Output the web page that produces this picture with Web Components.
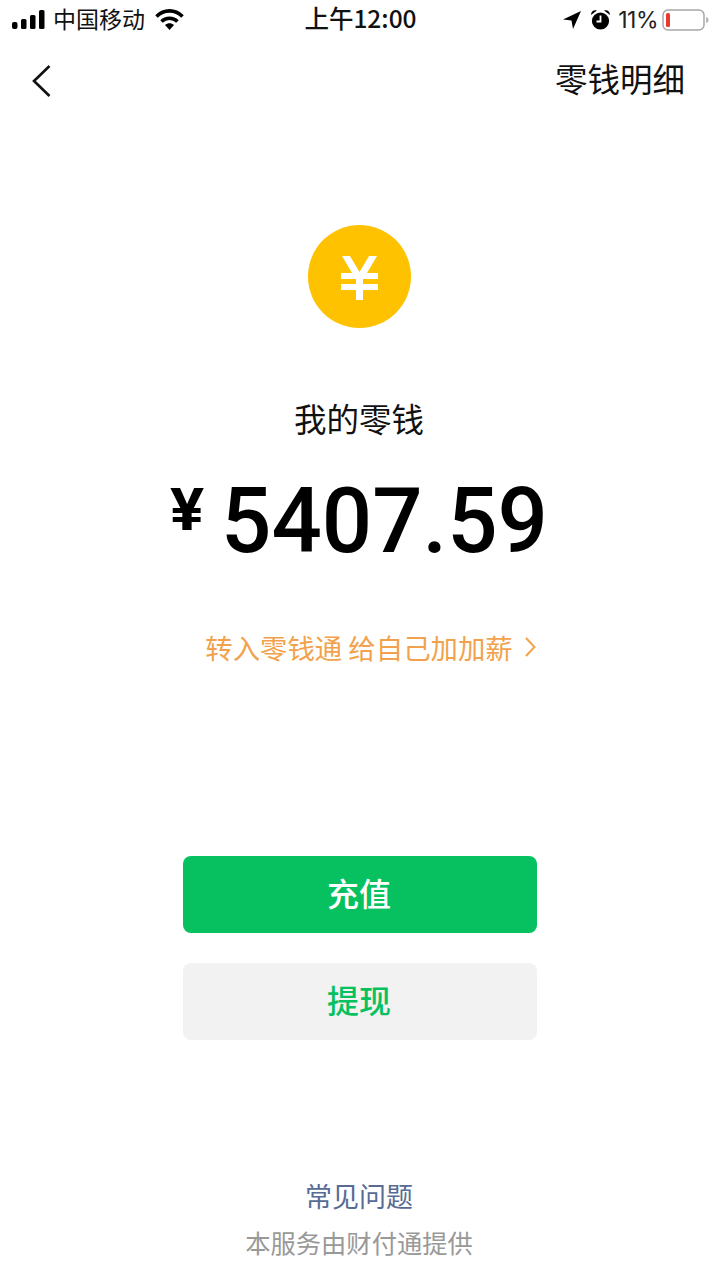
<!DOCTYPE html>
<html lang="zh">
<head>
<meta charset="utf-8">
<title>零钱</title>
<style>
  html, body { margin: 0; background: #fff; }
  body { font-family: "Noto Sans CJK SC", "Noto Sans", sans-serif; color: #000; }
</style>
</head>
<body>
<wallet-page></wallet-page>

<script>
const FONT = `"Noto Sans CJK SC", "Noto Sans", sans-serif`;

class StatusBar extends HTMLElement {
  constructor() {
    super();
    this.attachShadow({ mode: 'open' });
    this.shadowRoot.innerHTML = `
      <style>
        :host { display: grid; grid-template-columns: 1fr auto 1fr; align-items: center; height: 40px; padding: 0 11px 0 12px; font: 400 23px/36px ${FONT}; color: #111; }
        .left, .right { display: flex; align-items: center; }
        .right { justify-content: flex-end; }
        .carrier { margin-left: 8px; padding-bottom: 4px; }
        .wifi { margin-left: 10px; }
        .time { font-size: 24.500px; font-weight: 500; padding-bottom: 4px; }
        .pct { margin-left: 7px; padding-bottom: 1px; font-family: "Inter", "Liberation Sans", sans-serif; font-size: 23px; letter-spacing: -.5px; color: #222; }
        .alarm { margin-left: 8px; }
        .batt { margin-left: 4px; }
        svg { display: block; }
      </style>
      <div class="left">
        <svg width="33" height="20" viewBox="0 0 33 20">
          <rect x="0" y="12" width="5.500" height="7" rx="2"/>
          <rect x="9" y="9" width="5.500" height="10" rx="1.5"/>
          <rect x="18" y="5" width="5.500" height="14" rx="1.5"/>
          <rect x="27" y="0" width="5.500" height="19" rx="1.5"/>
        </svg>
        <span class="carrier">中国移动</span>
        <svg class="wifi" width="29" height="22" viewBox="0 0 29 22">
          <path d="M1.5 7.5C9-0 20-0 27.5 7.500" fill="none" stroke="#000" stroke-width="3.600"/>
          <path d="M6.500 12.500C11 8.200 18 8.200 22.500 12.500" fill="none" stroke="#000" stroke-width="3.600"/>
          <path d="M10 16 C12.800 13.500 16.200 13.500 19 16 L14.500 21Z"/>
        </svg>
      </div>
      <div class="time">上午12:00</div>
      <div class="right">
        <svg width="20" height="20" viewBox="0 0 20 20"><path d="M19 1 L1 9.500 L9.500 10.500 L11 19Z"/></svg>
        <svg class="alarm" width="21" height="22" viewBox="0 0 21 22">
          <circle cx="10.500" cy="12" r="8.600"/>
          <path d="M1 6 C1 2 4 0.500 7 1.500Z M20 6 C20 2 17 0.500 14 1.500Z"/>
          <path d="M10.500 6.500 V12.500 H6.500" fill="none" stroke="#fff" stroke-width="1.800"/>
        </svg>
        <span class="pct">11%</span>
        <svg class="batt" width="47" height="24" viewBox="0 0 47 24">
          <rect x="1" y="2" width="41" height="20" rx="5" fill="none" stroke="#a8a8a8" stroke-width="1.500"/>
          <rect x="4" y="5" width="4" height="14" rx="1.500" fill="#e8392f"/>
          <path d="M44 9 C46 9.500 46.500 10.500 46.500 12 C46.500 13.500 46 14.500 44 15Z" fill="#b5b5b5"/>
        </svg>
      </div>
    `;
  }
}

class NavBar extends HTMLElement {
  constructor() {
    super();
    this.attachShadow({ mode: 'open' });
    this.shadowRoot.innerHTML = `
      <style>
        :host { display: flex; align-items: center; justify-content: space-between; height: 82px; padding: 0 35px 0 32px; box-sizing: border-box; }
        span { font: 400 32.500px/1 ${FONT}; color: #111; padding-bottom: 6px; }
        svg { display: block; }
      </style>
      <svg width="20" height="34" viewBox="0 0 20 34"><path d="M17.500 2 L2 17 L17.500 32" fill="none" stroke="#111" stroke-width="2.600"/></svg>
      <span><slot></slot></span>
    `;
  }
}

class CoinIcon extends HTMLElement {
  constructor() {
    super();
    this.attachShadow({ mode: 'open' });
    this.shadowRoot.innerHTML = `
      <style>
        :host { display: block; width: 103px; height: 103px; }
        svg { display: block; }
      </style>
      <svg width="103" height="103" viewBox="0 0 103 103">
        <circle cx="51.500" cy="51.500" r="51.500" fill="#fec200"/>
        <path d="M34 31 H42 L51.500 47 L61 31 H69 L59 48 H70 V54 H55 V59 H70 V65 H55 V75 H48 V65 H33 V59 H48 V54 H33 V48 H44Z" fill="#fff"/>
      </svg>
    `;
  }
}

class BalanceAmount extends HTMLElement {
  constructor() {
    super();
    this.attachShadow({ mode: 'open' });
    this.shadowRoot.innerHTML = `
      <style>
        :host { display: flex; justify-content: center; align-items: flex-start; height: 100px; color: #000; }
        .yen { font: 700 59px/1 "Roboto", "Liberation Sans", sans-serif; width: 32px; margin-top: -7px; margin-right: 20px; text-align: center; transform: translateX(2px) scaleX(1.080); }
        .num { font: 500 90px/100px "Roboto", "Liberation Sans", sans-serif; display: inline-block; width: 322px; white-space: nowrap; transform: scaleX(.985); transform-origin: left top; margin-top: -15px; }
      </style>
      <span class="yen">¥</span><span class="num"></span>
    `;
  }
  connectedCallback() {
    this.shadowRoot.querySelector('.num').textContent = this.getAttribute('value');
  }
}

class WalletButton extends HTMLElement {
  constructor() {
    super();
    this.attachShadow({ mode: 'open' });
    this.shadowRoot.innerHTML = `
      <style>
        :host { display: flex; align-items: center; justify-content: center; width: 354px; height: 77px; box-sizing: border-box; padding: 0 2px 5px 0; border-radius: 8px; font: 500 32px/1 ${FONT}; background: #f2f2f2; color: #07c160; }
        :host([primary]) { background: #07c160; color: #fff; }
      </style>
      <slot></slot>
    `;
  }
}

class WalletPage extends HTMLElement {
  constructor() {
    super();
    this.attachShadow({ mode: 'open' });
    this.shadowRoot.innerHTML = `
      <style>
        :host { display: flex; flex-direction: column; align-items: stretch; width: 720px; height: 1280px; overflow: hidden; background: #fff; font-family: ${FONT}; }
        .main { display: flex; flex-direction: column; align-items: center; }
        coin-icon { margin-top: 103px; margin-left: -1px; }
        .title { margin-top: 68px; margin-left: -2px; font-size: 32.500px; line-height: 44px; color: #111; }
        balance-amount { margin-top: 47px; margin-left: -8px; }
        .promo { display: flex; align-items: center; margin-top: 42px; margin-left: 21px; font-size: 27.400px; line-height: 36px; color: #f2a24c; white-space: pre; }
        .promo svg { display: block; margin-left: 12px; }
        .actions { display: flex; flex-direction: column; align-items: center; gap: 30px; margin-top: 191px; }
        .foot { display: flex; flex-direction: column; align-items: center; margin-top: 138px; }
        .faq { margin-left: -2px; font-size: 27px; line-height: 36px; color: #576b95; }
        .by { margin-top: 10px; margin-left: -2px; font-size: 25.300px; line-height: 36px; color: #999; }
      </style>
      <status-bar></status-bar>
      <nav-bar>零钱明细</nav-bar>
      <div class="main">
        <coin-icon></coin-icon>
        <div class="title">我的零钱</div>
        <balance-amount value="5407.59"></balance-amount>
        <div class="promo">转入零钱通 给自己加加薪<svg width="11" height="20" viewBox="0 0 11 20"><path d="M1 1 L9.500 10 L1 19" fill="none" stroke="#f2a24c" stroke-width="2"/></svg></div>
        <div class="actions">
          <wallet-button primary>充值</wallet-button>
          <wallet-button>提现</wallet-button>
        </div>
        <div class="foot">
          <div class="faq">常见问题</div>
          <div class="by">本服务由财付通提供</div>
        </div>
      </div>
    `;
  }
}

customElements.define('status-bar', StatusBar);
customElements.define('nav-bar', NavBar);
customElements.define('coin-icon', CoinIcon);
customElements.define('balance-amount', BalanceAmount);
customElements.define('wallet-button', WalletButton);
customElements.define('wallet-page', WalletPage);
</script>
</body>
</html>
